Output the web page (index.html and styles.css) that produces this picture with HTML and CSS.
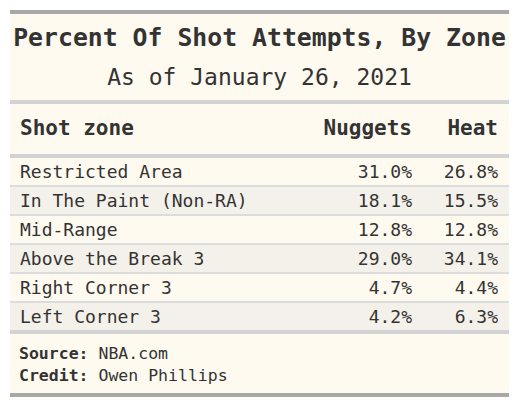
FILE: index.html
```html
<!DOCTYPE html>
<html>
<head>
<meta charset="utf-8">
<link rel="stylesheet" href="styles.css">
</head>
<body>
<div class="page">
  <table class="gt">
    <colgroup>
      <col class="c-zone">
      <col class="c-nug">
      <col class="c-heat">
    </colgroup>
    <thead>
      <tr class="heading">
        <th colspan="3">
          <div class="title">Percent Of Shot Attempts, By Zone</div>
          <div class="subtitle">As of January 26, 2021</div>
        </th>
      </tr>
      <tr class="labels">
        <th class="left">Shot zone</th>
        <th class="num">Nuggets</th>
        <th class="num">Heat</th>
      </tr>
    </thead>
    <tbody>
      <tr><td class="left">Restricted Area</td><td class="num">31.0%</td><td class="num">26.8%</td></tr>
      <tr class="striped"><td class="left">In The Paint (Non-RA)</td><td class="num">18.1%</td><td class="num">15.5%</td></tr>
      <tr><td class="left">Mid-Range</td><td class="num">12.8%</td><td class="num">12.8%</td></tr>
      <tr class="striped"><td class="left">Above the Break 3</td><td class="num">29.0%</td><td class="num">34.1%</td></tr>
      <tr><td class="left">Right Corner 3</td><td class="num">4.7%</td><td class="num">4.4%</td></tr>
      <tr class="striped last"><td class="left">Left Corner 3</td><td class="num">4.2%</td><td class="num">6.3%</td></tr>
    </tbody>
    <tfoot>
      <tr class="notes">
        <td colspan="3">
          <div><b>Source:</b> NBA.com</div>
          <div><b>Credit:</b> Owen Phillips</div>
        </td>
      </tr>
    </tfoot>
  </table>
</div>
</body>
</html>
```
FILE: styles.css
```css
html, body {
  margin: 0;
  padding: 0;
  background: #ffffff;
}
.page {
  padding: 10px;
}
.gt {
  width: 499px;
  border-collapse: collapse;
  table-layout: fixed;
  background: #fffaf0;
  color: #333333;
  font-family: "DejaVu Sans Mono", "Liberation Mono", monospace;
  border-top: 4px solid #a8a8a8;
  border-bottom: 4px solid #a8a8a8;
}
.c-zone { width: 300px; }
.c-nug { width: 113px; }
.c-heat { width: 86px; }
.gt th, .gt td {
  padding: 0;
  white-space: nowrap;
}
.gt .heading th {
  text-align: center;
  padding: 9px 0 8px 0;
  border-bottom: 4px solid #d3d3d3;
  font-weight: normal;
}
.title {
  font-size: 24.8px;
  font-weight: bold;
  line-height: 30px;
}
.subtitle {
  font-size: 23px;
  line-height: 30px;
  margin-top: 9px;
}
.gt .labels th {
  font-size: 21px;
  font-weight: bold;
  line-height: 25px;
  padding-top: 12px;
  padding-bottom: 13px;
  border-bottom: 4px solid #d3d3d3;
}
.gt .left {
  text-align: left;
  padding-left: 10px;
}
.gt .num {
  text-align: right;
  padding-right: 11px;
}
.gt tbody td {
  font-size: 18px;
  line-height: 23px;
  padding-top: 2px;
  padding-bottom: 2px;
  border-bottom: 2px solid #dcdcdc;
}
.gt tbody tr.striped td {
  background: #f4f1ea;
}
.gt tbody tr.last td {
  border-bottom: 4px solid #d3d3d3;
}
.gt .notes td {
  font-size: 16.5px;
  line-height: 22px;
  padding: 9px 10px 6px 9px;
}
.notes b {
  font-weight: bold;
}
```
